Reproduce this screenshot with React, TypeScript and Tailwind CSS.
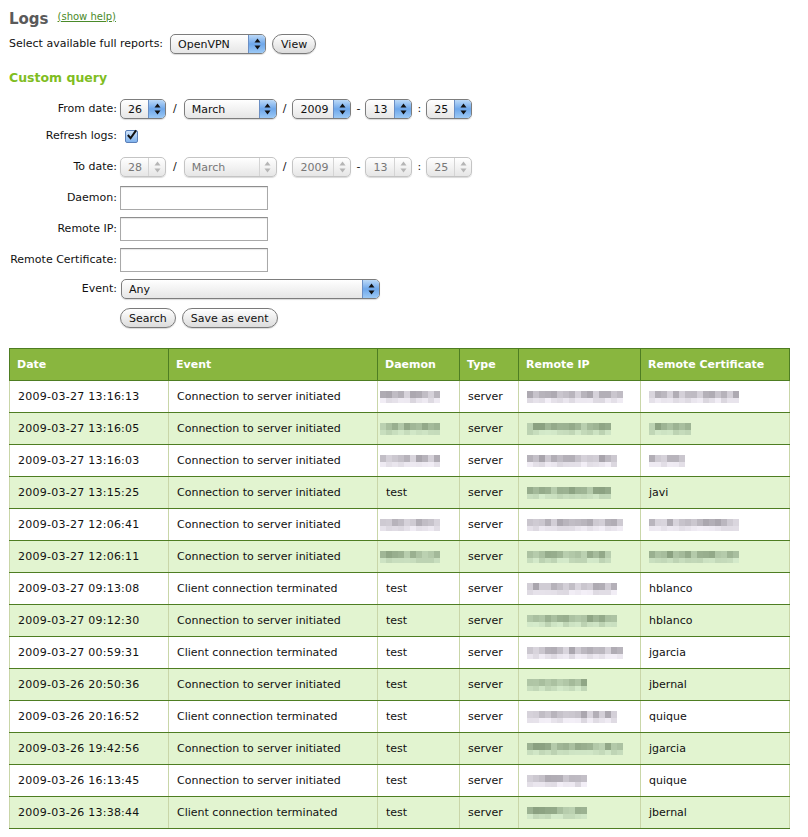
import React from "react";

type Row = {
  date: string;
  event: string;
  daemon: string | null;
  ip: number;
  cert: string | number;
};

const rows: Row[] = [
  { date: "2009-03-27 13:16:13", event: "Connection to server initiated", daemon: null, ip: 92, cert: 88 },
  { date: "2009-03-27 13:16:05", event: "Connection to server initiated", daemon: null, ip: 80, cert: 40 },
  { date: "2009-03-27 13:16:03", event: "Connection to server initiated", daemon: null, ip: 88, cert: 32 },
  { date: "2009-03-27 13:15:25", event: "Connection to server initiated", daemon: "test", ip: 84, cert: "javi" },
  { date: "2009-03-27 12:06:41", event: "Connection to server initiated", daemon: null, ip: 96, cert: 88 },
  { date: "2009-03-27 12:06:11", event: "Connection to server initiated", daemon: null, ip: 84, cert: 88 },
  { date: "2009-03-27 09:13:08", event: "Client connection terminated", daemon: "test", ip: 88, cert: "hblanco" },
  { date: "2009-03-27 09:12:30", event: "Connection to server initiated", daemon: "test", ip: 90, cert: "hblanco" },
  { date: "2009-03-27 00:59:31", event: "Client connection terminated", daemon: "test", ip: 92, cert: "jgarcia" },
  { date: "2009-03-26 20:50:36", event: "Connection to server initiated", daemon: "test", ip: 56, cert: "jbernal" },
  { date: "2009-03-26 20:16:52", event: "Client connection terminated", daemon: "test", ip: 88, cert: "quique" },
  { date: "2009-03-26 19:42:56", event: "Connection to server initiated", daemon: "test", ip: 92, cert: "jgarcia" },
  { date: "2009-03-26 16:13:45", event: "Connection to server initiated", daemon: "test", ip: 60, cert: "quique" },
  { date: "2009-03-26 13:38:44", event: "Client connection terminated", daemon: "test", ip: 56, cert: "jbernal" },
];

function rand(seed: number) {
  const x = Math.sin(seed * 12.9898) * 43758.5453;
  return x - Math.floor(x);
}

// pixelated block standing in for redacted data
function Blur({ width, seed, green }: { width: number; seed: number; green: boolean }) {
  const cols = Math.ceil(width / 6);
  const cells = [];
  for (let r = 0; r < 2; r++) {
    for (let c = 0; c < cols; c++) {
      const v = rand(seed * 97 + r * 31 + c);
      const light = r === 1 ? 218 + Math.round(v * 25) : 168 + Math.round(v * 50);
      const color = green
        ? `rgb(${light - 30}, ${light - 8}, ${light - 40})`
        : `rgb(${light}, ${light - 4}, ${Math.min(255, light + 4)})`;
      cells.push(
        <div key={`${r}-${c}`} style={{ width: 6, height: r === 0 ? 7 : 5, background: color }} />
      );
    }
  }
  return (
    <div className="grid" style={{ gridTemplateColumns: `repeat(${cols}, 6px)`, width: cols * 6 }}>
      {cells}
    </div>
  );
}

function Arrows({ disabled }: { disabled?: boolean }) {
  const fill = disabled ? "#b5b5b5" : "#111";
  return (
    <svg width="7" height="12" viewBox="0 0 7 12">
      <path d="M3.5 0.5 L6.5 4.5 L0.5 4.5 Z" fill={fill} />
      <path d="M3.5 11.5 L6.5 7.5 L0.5 7.5 Z" fill={fill} />
    </svg>
  );
}

function AquaSelect({ value, width, disabled }: { value: string; width: number; disabled?: boolean }) {
  return (
    <div
      className={`flex h-[20px] items-stretch overflow-hidden rounded-[5px] border ${
        disabled ? "border-[#c4c4c4] text-[#777]" : "border-[#7d7d7d] text-[#111]"
      } bg-gradient-to-b from-white to-[#e6e6e6] shadow-[0_1px_1px_rgba(0,0,0,0.15)]`}
      style={{ width }}
    >
      <div className="flex flex-1 items-center pl-[7px] pt-px">{value}</div>
      <div
        className={`flex w-[17px] items-center justify-center border-l ${
          disabled
            ? "border-[#d4d4d4] bg-transparent"
            : "border-[#6b8fc4] bg-gradient-to-b from-[#bcd9f7] via-[#6ea7ea] to-[#9cc9f5]"
        }`}
      >
        <Arrows disabled={disabled} />
      </div>
    </div>
  );
}

function AquaButton({ children }: { children: React.ReactNode }) {
  return (
    <button className="h-[20px] rounded-full border border-[#7a7a7a] bg-gradient-to-b from-white to-[#dcdcdc] px-[8px] pt-px text-[11px] leading-none text-[#111] shadow-[0_1px_1px_rgba(0,0,0,0.15)]">
      {children}
    </button>
  );
}

function TextInput() {
  return <div className="h-[24px] w-[148px] border border-[#a9a9a9] border-t-[#8e8e8e] bg-white shadow-[inset_0_1px_1px_rgba(0,0,0,0.1)]" />;
}

function DateRow({ d, h, m, disabled }: { d: string; h: string; m: string; disabled?: boolean }) {
  return (
    <div className="flex items-center">
      <AquaSelect value={d} width={46} disabled={disabled} />
      <span className="mx-[7px]">/</span>
      <AquaSelect value="March" width={93} disabled={disabled} />
      <span className="mx-[6px]">/</span>
      <AquaSelect value="2009" width={59} disabled={disabled} />
      <span className="mx-[5px]">-</span>
      <AquaSelect value={h} width={47} disabled={disabled} />
      <span className="mx-[5px]">:</span>
      <AquaSelect value={m} width={46} disabled={disabled} />
    </div>
  );
}

function FormRow({ label, children, className = "" }: { label: string; children: React.ReactNode; className?: string }) {
  return (
    <div className={`flex items-center ${className}`}>
      <div className="w-[111px] whitespace-nowrap pr-[3px] text-right">{label}</div>
      <div className="flex items-center">{children}</div>
    </div>
  );
}

export default function App() {
  return (
    <div
      className="min-h-screen w-[808px] bg-white text-[11px] leading-[14px] text-[#111]"
      style={{ fontFamily: '"DejaVu Sans", Verdana, sans-serif' }}
    >
      <div className="px-[9px]">
        <div className="flex h-[34px] items-center pt-[3px]">
          <h1 className="text-[15px] font-bold text-[#5a5a5a]">Logs</h1>
          <a className="ml-[9px] -mt-[4px] text-[10px] text-[#4a8a2a] underline">(show help)</a>
        </div>

        <div className="flex h-[20px] items-center">
          <span>Select available full reports:</span>
          <div className="ml-[7px]">
            <AquaSelect value="OpenVPN" width={96} />
          </div>
          <div className="ml-[6px]">
            <AquaButton>View</AquaButton>
          </div>
        </div>

        <h2 className="mt-[14px] flex h-[20px] items-center text-[12.5px] font-bold text-[#80bd1f]">Custom query</h2>

        <div className="mt-[11px]">
          <FormRow label="From date:">
            <DateRow d="26" h="13" m="25" />
          </FormRow>
          <FormRow label="Refresh logs:" className="mt-[7px] h-[20px]">
            <div className="ml-[5px] flex h-[13px] w-[13px] items-center justify-center rounded-[2px] border border-[#5a7fb8] bg-gradient-to-b from-[#cfe3fa] to-[#7fb2ec]">
              <svg width="12" height="12" viewBox="0 0 12 12" className="-mt-[2px]">
                <path d="M2 6 L5 9.5 L11 1" stroke="#111" strokeWidth="2.2" fill="none" />
              </svg>
            </div>
          </FormRow>
          <FormRow label="To date:" className="mt-[11px]">
            <DateRow d="28" h="13" m="25" disabled />
          </FormRow>
          <FormRow label="Daemon:" className="mt-[9px]">
            <TextInput />
          </FormRow>
          <FormRow label="Remote IP:" className="mt-[7px]">
            <TextInput />
          </FormRow>
          <FormRow label="Remote Certificate:" className="mt-[7px]">
            <TextInput />
          </FormRow>
          <FormRow label="Event:" className="mt-[7px]">
            <div className="ml-px">
              <AquaSelect value="Any" width={259} />
            </div>
          </FormRow>
          <FormRow label="" className="mt-[9px]">
            <div className="flex gap-[6px]">
              <AquaButton>Search</AquaButton>
              <AquaButton>Save as event</AquaButton>
            </div>
          </FormRow>
        </div>

        <table className="mt-[20px] w-[780px] table-fixed border-collapse">
          <colgroup>
            <col className="w-[159px]" />
            <col className="w-[209px]" />
            <col className="w-[82px]" />
            <col className="w-[59px]" />
            <col className="w-[122px]" />
            <col className="w-[149px]" />
          </colgroup>
          <thead>
            <tr className="h-[32px] bg-[#89b63f] text-left text-white">
              {["Date", "Event", "Daemon", "Type", "Remote IP", "Remote Certificate"].map((h) => (
                <th key={h} className="border border-[#4e7d22] px-[7px] font-bold">
                  {h}
                </th>
              ))}
            </tr>
          </thead>
          <tbody>
            {rows.map((r, i) => {
              const green = i % 2 === 1;
              const cell = "border-x border-b border-x-[#c9d6a8] border-b-[#4e7d22] px-[8px]";
              return (
                <tr key={r.date} className={`h-[32px] ${green ? "bg-[#e2f4d0]" : "bg-white"}`}>
                  <td className={`${cell} tracking-[0.25px]`}>{r.date}</td>
                  <td className={cell}>{r.event}</td>
                  <td className={`${cell} ${r.daemon ? "" : "pl-[2px]"}`}>
                    {r.daemon ?? <Blur width={58} seed={i + 1} green={green} />}
                  </td>
                  <td className={cell}>server</td>
                  <td className={cell}>
                    <Blur width={r.ip} seed={i + 50} green={green} />
                  </td>
                  <td className={cell}>
                    {typeof r.cert === "string" ? r.cert : <Blur width={r.cert} seed={i + 100} green={green} />}
                  </td>
                </tr>
              );
            })}
          </tbody>
        </table>
      </div>
    </div>
  );
}
